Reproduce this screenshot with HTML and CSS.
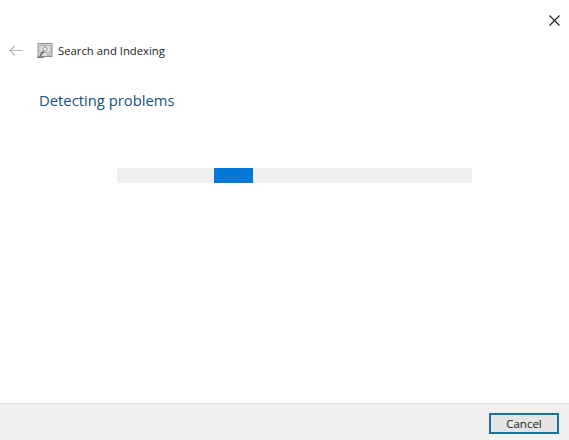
FILE: index.html
```html
<!DOCTYPE html>
<html lang="en">
<head>
<meta charset="utf-8">
<title>Search and Indexing</title>
<link rel="stylesheet" href="styles.css">
</head>
<body>
<div class="window">
  <div class="closebar">
    <svg class="close" width="11" height="11" viewBox="0 0 11 11"><path d="M0.5 0.5L10.5 10.5M10.5 0.5L0.5 10.5" stroke="#1a1a1a" stroke-width="1.1" fill="none"/></svg>
  </div>
  <div class="nav">
    <svg class="back" width="14" height="11" viewBox="0 0 14 11"><path d="M13.5 5.5H1M5.8 0.8L1 5.5L5.8 10.2" stroke="#b9b9b9" stroke-width="1.2" fill="none"/></svg>
    <svg class="appicon" width="16" height="15" viewBox="0 0 16 15">
      <rect x="1" y="0.5" width="14" height="13" fill="#dcdcdc" stroke="#8f8f8f"/>
      <rect x="3" y="2.5" width="10" height="7" fill="#efefef" stroke="#aaa"/>
      <circle cx="8" cy="6" r="2.2" fill="none" stroke="#888"/>
      <path d="M6.5 8L3 13" stroke="#666" stroke-width="1.6"/>
      <path d="M0 14.5H7" stroke="#777"/>
      <path d="M10 12H14" stroke="#999"/>
    </svg>
    <span class="navtitle">Search and Indexing</span>
  </div>
  <main class="content">
    <h1 class="heading">Detecting problems</h1>
    <div class="track"><div class="bar"></div></div>
  </main>
  <footer class="footer">
    <button class="cancel" type="button">Cancel</button>
  </footer>
</div>
</body>
</html>
```
FILE: styles.css
```css
html, body {
  margin: 0;
  padding: 0;
  background: #fff;
}
.window {
  width: 569px;
  height: 440px;
  display: flex;
  flex-direction: column;
  font-family: "Open Sans", "Liberation Sans", sans-serif;
  overflow: hidden;
}
.closebar {
  height: 40px;
  flex: none;
  display: flex;
  justify-content: flex-end;
  padding: 15px 9px 0 0;
  box-sizing: border-box;
}
.close {
  display: block;
}
.nav {
  height: 21px;
  flex: none;
  display: flex;
  align-items: center;
  padding-left: 9px;
}
.back {
  margin-right: 14px;
}
.appicon {
  margin-right: 5px;
}
.navtitle {
  font-size: 11.3px;
  color: #222;
}
.content {
  flex: 1;
  padding: 0 0 0 39px;
}
.heading {
  margin: 28px 0 0;
  font-size: 14.8px;
  line-height: 22px;
  font-weight: 400;
  color: #17507a;
}
.track {
  width: 355px;
  height: 15px;
  margin: 57px 0 0 78px;
  background: #efefef;
  display: flex;
}
.bar {
  width: 39px;
  margin-left: 97px;
  background: #0478d7;
}
.footer {
  height: 37px;
  flex: none;
  box-sizing: border-box;
  border-top: 1px solid #dcdcdc;
  background: #f0f0f0;
  display: flex;
  justify-content: flex-end;
  align-items: flex-start;
  padding: 9px 10px 0 0;
}
.cancel {
  width: 70px;
  height: 21px;
  padding: 0;
  box-sizing: border-box;
  border: 2px solid #1d7396;
  background: #e4e4e4;
  font: 11.5px "Open Sans", "Liberation Sans", sans-serif;
  color: #222;
}
```
